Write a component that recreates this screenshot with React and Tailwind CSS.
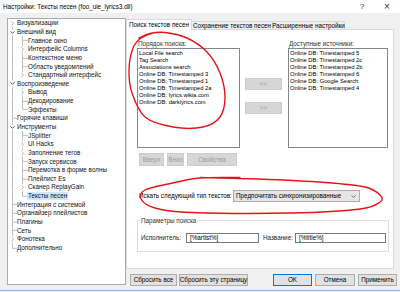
import React from "react";

// settings tree rows (l = level, a = expander: c collapsed / e expanded)
const tree = [
  { t: "Визуализации", l: 0, a: "c", first: true },
  { t: "Внешний вид", l: 0, a: "e" },
  { t: "Главное окно", l: 1 },
  { t: "Интерфейс Columns", l: 1, a: "c" },
  { t: "Контекстное меню", l: 1 },
  { t: "Область уведомлений", l: 1 },
  { t: "Стандартный интерфейс", l: 1, a: "c", last: true },
  { t: "Воспроизведение", l: 0, a: "e" },
  { t: "Вывод", l: 1, a: "c" },
  { t: "Декодирование", l: 1 },
  { t: "Эффекты", l: 1, last: true },
  { t: "Горячие клавиши", l: 0 },
  { t: "Инструменты", l: 0, a: "e" },
  { t: "JSplitter", l: 1 },
  { t: "UI Hacks", l: 1, a: "c" },
  { t: "Заполнение тегов", l: 1, a: "c" },
  { t: "Запуск сервисов", l: 1 },
  { t: "Перемотка в форме волны", l: 1 },
  { t: "Плейлист Es", l: 1 },
  { t: "Сканер ReplayGain", l: 1, a: "c" },
  { t: "Тексты песен", l: 1, last: true, sel: true },
  { t: "Интеграция с системой", l: 0 },
  { t: "Органайзер плейлистов", l: 0 },
  { t: "Плагины", l: 0 },
  { t: "Сеть", l: 0 },
  { t: "Фонотека", l: 0, a: "c" },
  { t: "Дополнительно", l: 0, last: true },
];

const searchOrder = [
  "Local File search",
  "Tag Search",
  "Associations search",
  "Online DB: Timestamped 3",
  "Online DB: Timestamped 1",
  "Online DB: Timestamped 2a",
  "Online DB: lyrics.wikia.com",
  "Online DB: darklyrics.com",
];

const available = [
  "Online DB: Timestamped 5",
  "Online DB: Timestamped 2c",
  "Online DB: Timestamped 2b",
  "Online DB: Timestamped 6",
  "Online DB: Google Search",
  "Online DB: Timestamped 4",
];

const ROW = 8.65;
const LINE = "#bdbdbd";

function Expander({ x, kind, m }) {
  if (kind === "e")
    return <path d={`M${x - 2} ${m - 1} L${x} ${m + 1} L${x + 2} ${m - 1}`} fill="none" stroke="#404040" strokeWidth="0.9" />;
  return <path d={`M${x - 1} ${m - 2} L${x + 1} ${m} L${x - 1} ${m + 2}`} fill="none" stroke="#a6a6a6" strokeWidth="0.9" />;
}

function Gutter({ row }) {
  const w = row.l === 0 ? 9 : 20;
  const m = ROW / 2;
  const x0 = 4.5;
  const x1 = 14.5;
  return (
    <svg width={w} height={ROW} viewBox={`0 0 ${w} ${ROW}`} className="shrink-0">
      {row.l === 0 ? (
        <>
          {!row.first && <line x1={x0} y1={0} x2={x0} y2={row.a ? m - 3 : m} stroke={LINE} strokeWidth="1" />}
          {!row.last && <line x1={x0} y1={row.a ? m + 3 : m} x2={x0} y2={ROW} stroke={LINE} strokeWidth="1" />}
          {row.a ? <Expander x={x0} kind={row.a} m={m} /> : <line x1={x0} y1={m} x2={9} y2={m} stroke={LINE} strokeWidth="1" />}
        </>
      ) : (
        <>
          <line x1={x0} y1={0} x2={x0} y2={ROW} stroke={LINE} strokeWidth="1" />
          <line x1={x1} y1={0} x2={x1} y2={row.a ? m - 3 : m} stroke={LINE} strokeWidth="1" />
          {!row.last && <line x1={x1} y1={row.a ? m + 3 : m} x2={x1} y2={ROW} stroke={LINE} strokeWidth="1" />}
          {row.a ? <Expander x={x1} kind={row.a} m={m} /> : <line x1={x1} y1={m} x2={20} y2={m} stroke={LINE} strokeWidth="1" />}
        </>
      )}
    </svg>
  );
}

// catmull-rom through the points, for the hand drawn marker loops
function smooth(pts) {
  let d = `M${pts[0][0]} ${pts[0][1]}`;
  for (let i = 0; i < pts.length - 1; i++) {
    const p0 = pts[i - 1] || pts[i];
    const p1 = pts[i];
    const p2 = pts[i + 1];
    const p3 = pts[i + 2] || p2;
    const c1 = [p1[0] + (p2[0] - p0[0]) / 6, p1[1] + (p2[1] - p0[1]) / 6];
    const c2 = [p2[0] - (p3[0] - p1[0]) / 6, p2[1] - (p3[1] - p1[1]) / 6];
    d += ` C${c1[0]} ${c1[1]} ${c2[0]} ${c2[1]} ${p2[0]} ${p2[1]}`;
  }
  return d;
}

const loop1 = [
  [139, 38], [150, 33.5], [165, 32.5], [187, 38], [207, 52], [220, 73], [225, 97],
  [220, 117], [203, 127], [173, 127], [145, 117], [132, 93], [129, 70], [133, 48], [141, 38], [153, 33],
];
const loop2 = [
  [200, 177.5], [258, 179], [325, 182.5], [365, 187], [380, 195], [380, 202], [360, 209],
  [292, 213], [192, 212.5], [155, 208], [141, 199], [145, 190], [168, 184], [200, 178], [240, 177.5],
];

function ListBox({ items }) {
  return (
    <div className="h-[100px] border border-[#828790] bg-white pt-[1px] pl-[1px]">
      {items.map((s) => (
        <div key={s} className="h-[7px] leading-[7px] text-[5.8px] whitespace-nowrap">
          {s}
        </div>
      ))}
    </div>
  );
}

export default function App() {
  return (
    <div className="relative w-[400px] h-[292px] overflow-hidden bg-[#f0f0f0] text-black font-['Liberation_Sans',Arial,sans-serif] flex flex-col">
      {/* title bar */}
      <div className="h-[13px] shrink-0 bg-white flex items-center pl-[3px] text-[6.3px]">
        <span>Настройки: Тексты песен (foo_uie_lyrics3.dll)</span>
        <span className="ml-auto w-[24px] text-center text-[8px] text-[#333]">?</span>
        <span className="w-[26px] text-center text-[10px] leading-none text-[#333]">×</span>
      </div>

      <div className="flex flex-1 min-h-0">
        {/* tree */}
        <div className="ml-[7px] mt-[5px] w-[119px] h-[267px] shrink-0 border border-[#aaaaaa] bg-white text-[6.3px] text-[#111]">
          {tree.map((r) => (
            <div key={r.t} className="flex items-center h-[8.65px] whitespace-nowrap">
              <Gutter row={r} />
              <span className={r.sel ? "bg-[#cce8ff] -ml-[1px] px-[1px] leading-[8px]" : "leading-[8px]"}>{r.t}</span>
            </div>
          ))}
        </div>

        {/* right side */}
        <div className="w-[272px] mt-[6px] flex flex-col">
          <div className="flex items-end h-[11px] -mb-[1px] relative z-10 text-[6.3px]">
            <div className="w-[66px] h-[11px] bg-white border border-b-0 border-[#d9d9d9] flex items-center justify-center whitespace-nowrap">Поиск текстов песен</div>
            <div className="w-[81px] h-[9px] bg-[#f0f0f0] border border-l-0 border-[#d9d9d9] flex items-center justify-center whitespace-nowrap">Сохранение текстов песен</div>
            <div className="w-[72px] h-[9px] bg-[#f0f0f0] border border-l-0 border-[#d9d9d9] flex items-center justify-center whitespace-nowrap">Расширенные настройки</div>
          </div>

          <div className="w-[268px] h-[240px] border border-[#d9d9d9] bg-white pl-[10px] pt-[10px] text-[6.3px]">
            <div className="flex">
              <div className="w-[103px]">
                <div className="h-[7px] leading-[7px] pl-[1px] text-[#333]">Порядок поиска:</div>
                <div className="mt-[1px]">
                  <ListBox items={searchOrder} />
                </div>
              </div>
              <div className="w-[48px] pl-[5px] pt-[38px] flex flex-col gap-[12px]">
                <div className="w-[37px] h-[12px] bg-[#d6d6d6] border border-[#cccccc] text-[#9b9b9b] flex items-center justify-center">&lt;&lt;</div>
                <div className="w-[37px] h-[12px] bg-[#d6d6d6] border border-[#cccccc] text-[#9b9b9b] flex items-center justify-center">&gt;&gt;</div>
              </div>
              <div className="w-[100px]">
                <div className="h-[7px] leading-[7px] pl-[1px] text-[#333]">Доступные источники:</div>
                <div className="mt-[1px]">
                  <ListBox items={available} />
                </div>
              </div>
            </div>

            <div className="mt-[5px] pl-[2px] flex gap-[3px] text-[#9b9b9b]">
              <div className="w-[25px] h-[13px] bg-[#d6d6d6] border border-[#cccccc] flex items-center justify-center">Вверх</div>
              <div className="w-[17px] h-[13px] bg-[#d6d6d6] border border-[#cccccc] flex items-center justify-center">Вниз</div>
              <div className="w-[50px] h-[13px] bg-[#d6d6d6] border border-[#cccccc] flex items-center justify-center">Свойства</div>
            </div>

            <div className="mt-[24px] flex items-center h-[12px]">
              <div className="w-[96px] pl-[2px] whitespace-nowrap">Искать следующий тип текстов:</div>
              <div className="w-[127px] h-[12px] bg-[#e5e5e5] border border-[#acacac] flex items-center pl-[2px] pr-[3px]">
                <span className="whitespace-nowrap">Предпочитать синхронизированные</span>
                <svg className="ml-auto" width="5" height="3" viewBox="0 0 5 3">
                  <path d="M0.5 0.5 L2.5 2.5 L4.5 0.5" fill="none" stroke="#555" strokeWidth="0.8" />
                </svg>
              </div>
            </div>

            <fieldset className="mt-[15px] w-[252px] h-[35px] border border-[#dcdcdc] p-0">
              <legend className="ml-[2px] px-[1px] h-[7px] leading-[7px] text-[#333]">Параметры поиска</legend>
              <div className="mt-[9px] flex items-center h-[10px] pl-[3px]">
                <div className="w-[45px] text-[#222] whitespace-nowrap">Исполнитель:</div>
                <div className="w-[73px] h-[10px] border border-[#7a7a7a] bg-white flex items-center pl-[3px]">[%artist%]</div>
                <div className="ml-[4px] w-[32px] text-[#222] whitespace-nowrap">Название:</div>
                <div className="w-[91px] h-[10px] border border-[#7a7a7a] bg-white flex items-center pl-[3px]">[%title%]</div>
              </div>
            </fieldset>
          </div>

          <div className="mt-[5px] flex items-center text-[6.3px]">
            <div className="ml-[4px] w-[47px] h-[12px] bg-[#e1e1e1] border border-[#adadad] flex items-center justify-center whitespace-nowrap">Сбросить все</div>
            <div className="ml-[2px] w-[69px] h-[12px] bg-[#e1e1e1] border border-[#adadad] flex items-center justify-center whitespace-nowrap">Сбросить эту страницу</div>
            <div className="ml-auto w-[39px] h-[12px] bg-[#e1e1e1] border border-[#0078d7] flex items-center justify-center">OK</div>
            <div className="ml-[3px] w-[40px] h-[12px] bg-[#e1e1e1] border border-[#adadad] flex items-center justify-center">Отмена</div>
            <div className="ml-[3px] mr-[1px] w-[39px] h-[12px] bg-[#e1e1e1] border border-[#adadad] flex items-center justify-center">Применить</div>
          </div>
        </div>
      </div>

      <div className="h-[1px] mb-[1px] shrink-0 bg-[#8ab8e6]" />

      {/* red marker annotations drawn over the dialog */}
      <svg className="absolute inset-0 pointer-events-none" width="400" height="292" viewBox="0 0 400 292">
        <path d={smooth(loop1)} fill="none" stroke="#e3151b" strokeWidth="1.4" strokeLinecap="round" />
        <path d={smooth(loop2)} fill="none" stroke="#e3151b" strokeWidth="1.4" strokeLinecap="round" />
      </svg>
    </div>
  );
}
